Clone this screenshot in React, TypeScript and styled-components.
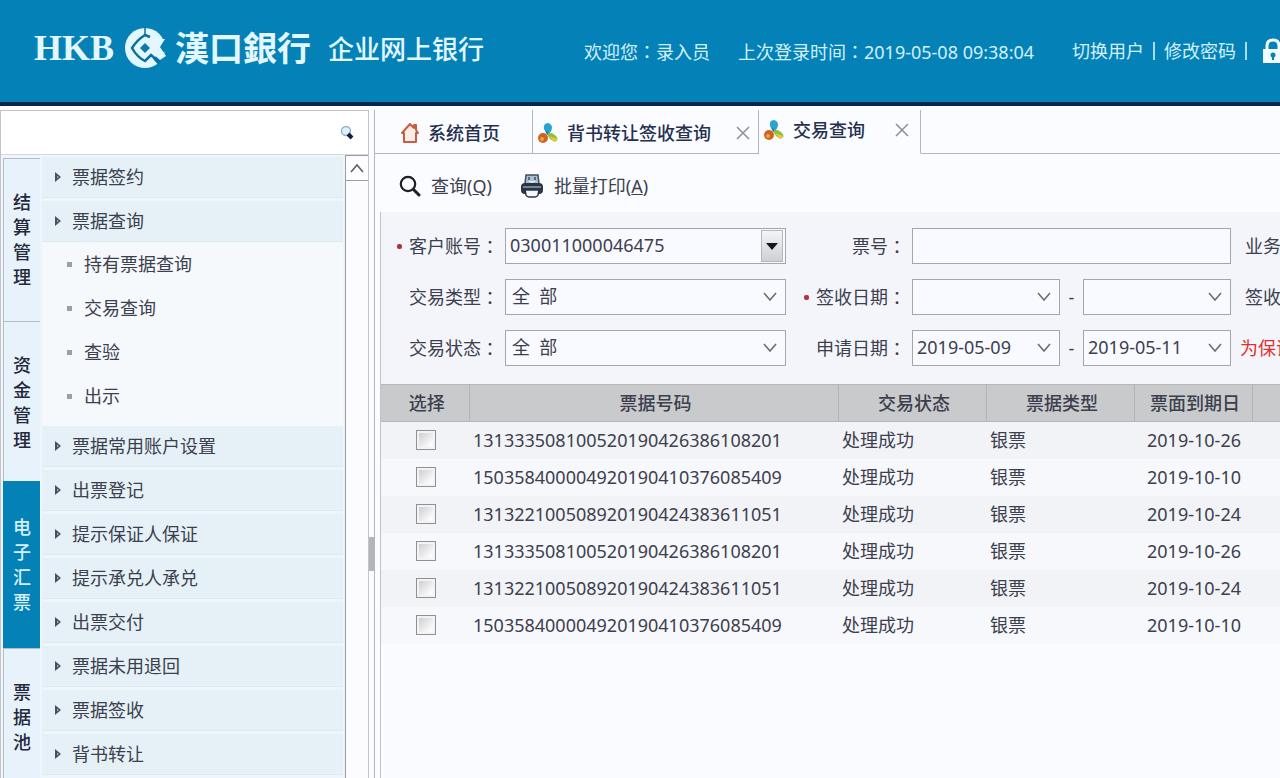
import React from "react";
import styled, { createGlobalStyle, css } from "styled-components";

const GlobalStyle = createGlobalStyle`
  * { box-sizing: border-box; }
  html, body, #root { height: 100%; }
  body {
    margin: 0;
    overflow: hidden;
    background: #fbfcff;
    color: #3c404e;
    font: 18px/24px "Noto Sans", "Noto Sans CJK SC", sans-serif;
  }
  button, input, select { font: inherit; color: inherit; }
  ul { list-style: none; margin: 0; padding: 0; }
  a { color: inherit; text-decoration: none; }
`;

const Page = styled.div`
  display: flex;
  flex-direction: column;
  height: 100%;
  overflow: hidden;
`;

const Header = styled.header`
  display: flex;
  align-items: center;
  flex: none;
  height: 106px;
  padding: 0 0 6px 34px;
  overflow: hidden;
  white-space: nowrap;
  background: #0482b8;
  border-bottom: 4px solid #02284c;
  color: #e2f7ff;
`;

const Brand = styled.div`
  display: flex;
  align-items: center;
  flex: none;
  width: 550px;
`;

const BrandLatin = styled.span`
  font: bold 36px/40px "Liberation Serif", serif;
`;

const BrandMark = styled.svg`
  width: 42px;
  height: 42px;
  margin: 0 9px 0 10px;
`;

const BrandName = styled.span`
  font-size: 34px;
  line-height: 40px;
  font-weight: 700;
`;

const BrandProduct = styled.h1`
  margin: 0 0 0 17px;
  padding-top: 2px;
  font-size: 26px;
  line-height: 40px;
  font-weight: 500;
`;

const HeaderInfo = styled.div`
  display: flex;
  align-items: center;
  flex: none;
  gap: 28px;
  padding-top: 6px;
  color: #d3f0fb;
`;

const HeaderLinks = styled.nav`
  display: flex;
  align-items: center;
  gap: 9px;
  margin-left: 10px;
`;

const Divider = styled.span`
  width: 2px;
  height: 18px;
  background: #a9dcf0;
`;

const LockIcon = styled.svg`
  width: 24px;
  height: 26px;
  margin-left: 6px;
  color: #f2fcff;
`;

const Colon = styled.span`
  font-family: "Noto Sans CJK TC", sans-serif;
`;

const Body = styled.div`
  display: flex;
  flex: 1;
  min-height: 0;
  padding-top: 4px;
`;

const Sidebar = styled.aside`
  display: flex;
  flex-direction: column;
  flex: none;
  width: 369px;
  border: 1px solid #c3c3c9;
  border-bottom: 0;
`;

const SearchBar = styled.label`
  display: flex;
  align-items: center;
  flex: none;
  height: 44px;
  padding: 0 13px 0 8px;
  background: #fff;
  border-bottom: 1px solid #d5d9df;
`;

const SearchInput = styled.input`
  flex: 1;
  min-width: 0;
  border: 0;
  outline: 0;
  background: transparent;
`;

const SidebarBody = styled.div`
  display: flex;
  flex: 1;
  min-height: 0;
  overflow: hidden;
  background: #eff6fb;
`;

const ModuleTabs = styled.nav`
  flex: none;
  width: 39px;
  padding: 3px 0 0 2px;
`;

const ModuleTab = styled.button<{ $active?: boolean }>`
  display: block;
  width: 37px;
  padding: 31px 8px;
  border: 1px solid #b4bcc6;
  border-width: 1px 0 0 1px;
  background: #e8f2fa;
  color: #23283a;
  font-size: 18px;
  line-height: 25px;
  font-weight: 500;
  text-align: center;
  white-space: normal;
  word-break: break-all;
  ${(p) =>
    p.$active &&
    css`
      position: relative;
      margin-top: -3px;
      padding: 33px 8px;
      border-color: #0482b8;
      background: #0482b8;
      color: #d5f1fb;
    `}
`;

const Menu = styled.ul`
  flex: 1;
  min-width: 0;
  padding: 2px 2px 0;
`;

const MenuLink = styled.a<{ $open?: boolean }>`
  display: flex;
  align-items: center;
  gap: 10px;
  height: 41px;
  margin-bottom: ${(p) => (p.$open ? 0 : 3)}px;
  padding-left: 12px;
  background: #e6f1f7;
  border-bottom: 1px solid #dee8ef;
`;

const SubMenu = styled.ul`
  padding-bottom: 8px;
  background: #f6f9fc;
`;

const SubLink = styled.a`
  display: flex;
  align-items: center;
  gap: 12px;
  height: 44px;
  padding-left: 25px;
`;

const Bullet = styled.span`
  width: 5px;
  height: 5px;
  background: #9aa0aa;
`;

const ScrollTrack = styled.div`
  flex: none;
  width: 23px;
  background: #fcfcff;
  border-left: 1px solid #9a9ca3;
`;

const ScrollUp = styled.button`
  display: flex;
  align-items: center;
  justify-content: center;
  width: 100%;
  height: 26px;
  padding: 0;
  border: 1px solid #9a9ca3;
  border-width: 1px 0;
  background: #fdfdff;
`;

const Splitter = styled.div`
  display: flex;
  align-items: center;
  flex: none;
  width: 5px;
  padding-top: 220px;
`;

const SplitterGrip = styled.span`
  width: 5px;
  height: 34px;
  background: #b4b5ba;
`;

const Main = styled.main`
  display: flex;
  flex-direction: column;
  flex: 1;
  min-width: 0;
  overflow: hidden;
  border-left: 1px solid #b4b6bd;
`;

const TabBar = styled.nav`
  display: flex;
  flex: none;
  height: 44px;
`;

const PageTab = styled.div<{ $width: number; $active?: boolean }>`
  display: flex;
  align-items: center;
  flex: none;
  width: ${(p) => p.$width}px;
  padding: 3px ${(p) => (p.$active ? 11 : 8)}px ${(p) => (p.$active ? 6 : 0)}px 4px;
  border-right: 1px solid #b4b6bd;
  border-bottom: 1px solid ${(p) => (p.$active ? "transparent" : "#b4b6bd")};
`;

const TabLink = styled.a<{ $home?: boolean }>`
  display: flex;
  align-items: center;
  flex: 1;
  gap: 8px;
  padding-left: ${(p) => (p.$home ? 21 : 0)}px;
  color: #25304f;
  font-weight: 500;
`;

const TabClose = styled.button`
  display: flex;
  padding: 0;
  border: 0;
  background: none;
`;

const TabRest = styled.div`
  flex: 1;
  border-bottom: 1px solid #b4b6bd;
`;

const Toolbar = styled.div`
  display: flex;
  align-items: center;
  flex: none;
  gap: 28px;
  height: 58px;
  padding: 6px 0 0 24px;
`;

const ToolButton = styled.button`
  display: flex;
  align-items: center;
  gap: 10px;
  padding: 0;
  border: 0;
  background: none;
`;

const Panel = styled.section`
  display: flex;
  flex-direction: column;
  flex: 1;
  min-height: 0;
  margin-left: 5px;
  border-left: 1px solid #c2c3c9;
  background: #fafbff;
`;

const QueryForm = styled.form`
  display: grid;
  grid-template-columns: 124px 281px 126px 319px auto;
  row-gap: 15px;
  flex: none;
  padding: 16px 0 18px;
  white-space: nowrap;
  background: #f4f5fb;
`;

const FieldLabel = styled.label`
  display: flex;
  align-items: center;
  justify-content: flex-end;
  padding-right: 6px;
`;

const Required = styled.span`
  width: 5px;
  height: 5px;
  margin-right: 7px;
  border-radius: 2px;
  background: #b3313d;
`;

const SideLabel = styled.span<{ $alert?: boolean }>`
  align-self: center;
  padding-left: ${(p) => (p.$alert ? 9 : 14)}px;
  color: ${(p) => (p.$alert ? "#e02f2f" : "inherit")};
`;

const FieldBox = styled.div`
  position: relative;
  display: flex;
  flex: 1;
  min-width: 0;
  height: 36px;
  border: 1px solid #a3a7ad;
  background: #f9faff;
`;

const controlStyle = css`
  appearance: none;
  flex: 1;
  min-width: 0;
  height: 100%;
  padding: 0 4px 2px;
  border: 0;
  border-radius: 0;
  outline: 0;
  background: transparent;
  line-height: 24px;
`;

const TextInput = styled.input`
  ${controlStyle}
`;

const SelectInput = styled.select`
  ${controlStyle}
  padding-left: 6px;
`;

const FieldArrow = styled.svg`
  position: absolute;
  top: 11px;
  right: 7px;
  width: 16px;
  height: 12px;
  pointer-events: none;
`;

const DropButton = styled.button`
  display: flex;
  align-items: center;
  justify-content: center;
  width: 22px;
  margin: 1px 2px;
  padding: 0;
  border: 1px solid #b5b7bc;
  background: linear-gradient(#f3f4f8, #cfd0d4);
`;

const DateRange = styled.div`
  display: flex;
  align-items: center;
`;

const Dash = styled.span`
  flex: none;
  width: 23px;
  text-align: center;
`;

const Table = styled.table`
  width: 100%;
  table-layout: fixed;
  border-collapse: collapse;
  white-space: nowrap;
`;

const HeadCell = styled.th<{ $width?: number }>`
  width: ${(p) => (p.$width ? `${p.$width}px` : "auto")};
  height: 37px;
  padding: 0 0 0 4px;
  border-right: 1px solid #b4b5b8;
  border-bottom: 1px solid #b6b7ba;
  border-top: 1px solid #b6b7ba;
  background: #c9cacc;
  font-weight: 500;
  text-align: center;
  &:last-child { border-right: 0; }
`;

const Row = styled.tr`
  background: #f7f8fc;
  &:nth-child(odd) { background: #f2f3f6; }
`;

const Cell = styled.td<{ $center?: boolean }>`
  height: 37px;
  padding: 0 0 0 ${(p) => (p.$center ? 2 : 4)}px;
  text-align: ${(p) => (p.$center ? "center" : "left")};
`;

const CheckBox = styled.input`
  appearance: none;
  display: block;
  width: 20px;
  height: 20px;
  margin: 0 auto;
  border: 1px solid #8e9096;
  background: linear-gradient(135deg, #c6c7cb, #fafafa 75%);
  box-shadow: inset 0 0 0 2px #f3f3f5;
`;

const modules = [
  { name: "结算管理" },
  { name: "资金管理" },
  { name: "电子汇票", active: true },
  { name: "票据池" },
];

const menu: { name: string; children?: string[] }[] = [
  { name: "票据签约" },
  { name: "票据查询", children: ["持有票据查询", "交易查询", "查验", "出示"] },
  { name: "票据常用账户设置" },
  { name: "出票登记" },
  { name: "提示保证人保证" },
  { name: "提示承兑人承兑" },
  { name: "出票交付" },
  { name: "票据未用退回" },
  { name: "票据签收" },
  { name: "背书转让" },
];

const bills = [
  ["131333508100520190426386108201", "2019-10-26"],
  ["150358400004920190410376085409", "2019-10-10"],
  ["131322100508920190424383611051", "2019-10-24"],
  ["131333508100520190426386108201", "2019-10-26"],
  ["131322100508920190424383611051", "2019-10-24"],
  ["150358400004920190410376085409", "2019-10-10"],
];

const MenuArrow = () => (
  <svg width="8" height="12" viewBox="0 0 8 12" aria-hidden="true">
    <path d="M1 1L7 6L1 11Z" fill="#4a5160" />
    <path d="M3 5L5 6L3 7Z" fill="#b9c2cc" />
  </svg>
);

const PinwheelIcon = () => (
  <svg width="22" height="22" viewBox="0 0 22 22" aria-hidden="true">
    <path d="M9 11L7 7Q6 1 11 1Q15 2 15 6Q15 9 12 12Z" fill="#2ba3cf" />
    <path d="M9 9L12 12L10 13Z" fill="#1d5f7d" />
    <circle cx="6" cy="16" r="5" fill="#cf6420" />
    <circle cx="5" cy="17" r="2" fill="#eba24a" />
    <path d="M11 11Q15 10 19 14Q22 18 19 19Q14 20 11 14Z" fill="#8fbf3c" />
    <path d="M12 14L20 17Q20 20 17 20Z" fill="#e3cc36" />
  </svg>
);

const HomeIcon = () => (
  <svg width="20" height="22" viewBox="0 0 20 22" aria-hidden="true">
    <path
      d="M10 2L2 11H4V20H16V11H18L16 8V3H14V6Z"
      fill="#fdeee5"
      stroke="#c95c45"
      strokeWidth="2"
      strokeLinejoin="round"
    />
  </svg>
);

const CloseIcon = () => (
  <svg width="14" height="14" viewBox="0 0 14 14" aria-hidden="true">
    <path d="M1 1L13 13M13 1L1 13" stroke="#8d8f96" strokeWidth="1.5" />
  </svg>
);

const SearchIcon = () => (
  <svg width="22" height="22" viewBox="0 0 22 22" aria-hidden="true">
    <circle cx="9" cy="9" r="7.2" fill="none" stroke="#1d1f2b" strokeWidth="2.2" />
    <path d="M14.500 14.500L20 20" stroke="#1d1f2b" strokeWidth="3" strokeLinecap="round" />
  </svg>
);

const PrinterIcon = () => (
  <svg width="24" height="24" viewBox="0 0 24 24" aria-hidden="true">
    <path d="M5 10L6 1H18L19 10Z" fill="#a9c0d2" stroke="#3f4d5e" strokeWidth="1.5" />
    <path d="M9 3V6M15 3V6" stroke="#3f4d5e" strokeWidth="1.500" />
    <path d="M9 7Q12 9 15 7" fill="none" stroke="#f2f7fb" strokeWidth="1.500" />
    <rect x="1" y="9" width="22" height="11" rx="4" fill="#2b3444" />
    <path d="M3 13H21" stroke="#8ea0b2" strokeWidth="1.5" />
    <path d="M5 16H19L18 21Q17 23 15 23H9Q7 23 6 21Z" fill="#f4f7fb" stroke="#2b3444" strokeWidth="1.5" />
  </svg>
);

const Chevron = () => (
  <FieldArrow viewBox="0 0 16 12" aria-hidden="true">
    <path d="M2 2L8 9L14 2" fill="none" stroke="#6b6e76" strokeWidth="1.6" />
  </FieldArrow>
);

const DateField = ({ id, label, value }: { id: string; label: string; value?: string }) => (
  <FieldBox>
    <TextInput id={id} aria-label={label} defaultValue={value} />
    <Chevron />
  </FieldBox>
);

const LabelFor = ({ id, text, required }: { id: string; text: string; required?: boolean }) => (
  <FieldLabel htmlFor={id}>
    {required && <Required />}
    {text}
    <Colon>：</Colon>
  </FieldLabel>
);

export default function App() {
  return (
    <Page>
      <GlobalStyle />
      <Header>
        <Brand>
          <BrandLatin>HKB</BrandLatin>
          <BrandMark viewBox="0 0 42 42" aria-hidden="true">
            <circle cx="21" cy="21" r="20" fill="currentColor" />
            <path d="M42 8L34 20L42 29L38 42L29 32L32 29L42 24Z" fill="#0482b8" />
            <path d="M34 12L41 12L36 20L42 29L36 33L27 25Z" fill="currentColor" />
            <path
              d="M36 36L27 28L21 34Q13 30 8 21Q13 13 21 8L26 10"
              fill="none"
              stroke="#0a6f9c"
              strokeWidth="2.500"
            />
            <path d="M21 0V8" stroke="#0a6f9c" strokeWidth="1.500" />
            <path d="M21 16L26 21L21 26L16 21Z" fill="#0b7bae" />
          </BrandMark>
          <BrandName>漢口銀行</BrandName>
          <BrandProduct>企业网上银行</BrandProduct>
        </Brand>
        <HeaderInfo>
          <span>
            欢迎您<Colon>：</Colon>录入员
          </span>
          <span>
            上次登录时间<Colon>：</Colon>2019-05-08 09:38:04
          </span>
          <HeaderLinks>
            <a href="#switch">切换用户</a>
            <Divider />
            <a href="#password">修改密码</a>
            <Divider />
            <LockIcon viewBox="0 0 24 26" aria-hidden="true">
              <path d="M5 13V8Q5 2 11 2Q17 2 17 8V13" fill="none" stroke="currentColor" strokeWidth="3" />
              <path d="M1 11H21V25H1Z" fill="currentColor" />
              <circle cx="11" cy="17" r="2.500" fill="#0482b8" />
              <path d="M10 17H12V22H10Z" fill="#0482b8" />
            </LockIcon>
          </HeaderLinks>
        </HeaderInfo>
      </Header>
      <Body>
        <Sidebar>
          <SearchBar>
            <SearchInput type="text" aria-label="搜索菜单" />
            <svg width="16" height="16" viewBox="0 0 16 16" aria-hidden="true">
              <circle cx="7" cy="6" r="4.500" fill="#e2f0fa" stroke="#8fb4cf" strokeWidth="1.500" />
              <path d="M9 9L13 13" stroke="#12203f" strokeWidth="4" />
            </svg>
          </SearchBar>
          <SidebarBody>
            <ModuleTabs>
              {modules.map((m) => (
                <ModuleTab key={m.name} type="button" $active={m.active}>
                  {m.name}
                </ModuleTab>
              ))}
            </ModuleTabs>
            <Menu>
              {menu.map((item) => (
                <li key={item.name}>
                  <MenuLink href="#menu" $open={!!item.children}>
                    <MenuArrow />
                    {item.name}
                  </MenuLink>
                  {item.children && (
                    <SubMenu>
                      {item.children.map((child) => (
                        <li key={child}>
                          <SubLink href="#submenu">
                            <Bullet />
                            {child}
                          </SubLink>
                        </li>
                      ))}
                    </SubMenu>
                  )}
                </li>
              ))}
            </Menu>
            <ScrollTrack>
              <ScrollUp type="button" aria-label="向上滚动">
                <svg width="14" height="10" viewBox="0 0 14 10" aria-hidden="true">
                  <path d="M1 9L7 2L13 9" fill="none" stroke="#5c5f68" strokeWidth="1.600" />
                </svg>
              </ScrollUp>
            </ScrollTrack>
          </SidebarBody>
        </Sidebar>
        <Splitter>
          <SplitterGrip />
        </Splitter>
        <Main>
          <TabBar>
            <PageTab $width={158}>
              <TabLink href="#home" $home>
                <HomeIcon />
                系统首页
              </TabLink>
            </PageTab>
            <PageTab $width={226}>
              <TabLink href="#endorse">
                <PinwheelIcon />
                背书转让签收查询
              </TabLink>
              <TabClose type="button" aria-label="关闭">
                <CloseIcon />
              </TabClose>
            </PageTab>
            <PageTab $width={162} $active>
              <TabLink href="#trade">
                <PinwheelIcon />
                交易查询
              </TabLink>
              <TabClose type="button" aria-label="关闭">
                <CloseIcon />
              </TabClose>
            </PageTab>
            <TabRest />
          </TabBar>
          <Toolbar>
            <ToolButton type="button">
              <SearchIcon />
              <span>
                查询(<u>Q</u>)
              </span>
            </ToolButton>
            <ToolButton type="button">
              <PrinterIcon />
              <span>
                批量打印(<u>A</u>)
              </span>
            </ToolButton>
          </Toolbar>
          <Panel>
            <QueryForm>
              <LabelFor id="account" text="客户账号" required />
              <FieldBox>
                <TextInput id="account" defaultValue="030011000046475" />
                <DropButton type="button" aria-label="选择账号">
                  <svg width="12" height="7" viewBox="0 0 12 7" aria-hidden="true">
                    <path d="M0 0H12L6 7Z" fill="#16171c" />
                  </svg>
                </DropButton>
              </FieldBox>
              <LabelFor id="bill" text="票号" />
              <FieldBox>
                <TextInput id="bill" />
              </FieldBox>
              <SideLabel>业务</SideLabel>

              <LabelFor id="type" text="交易类型" />
              <FieldBox>
                <SelectInput id="type">
                  <option>全&nbsp;&nbsp;部</option>
                </SelectInput>
                <Chevron />
              </FieldBox>
              <LabelFor id="sign-from" text="签收日期" required />
              <DateRange>
                <DateField id="sign-from" label="签收日期起" />
                <Dash>-</Dash>
                <DateField id="sign-to" label="签收日期止" />
              </DateRange>
              <SideLabel>签收</SideLabel>

              <LabelFor id="status" text="交易状态" />
              <FieldBox>
                <SelectInput id="status">
                  <option>全&nbsp;&nbsp;部</option>
                </SelectInput>
                <Chevron />
              </FieldBox>
              <LabelFor id="apply-from" text="申请日期" />
              <DateRange>
                <DateField id="apply-from" label="申请日期起" value="2019-05-09" />
                <Dash>-</Dash>
                <DateField id="apply-to" label="申请日期止" value="2019-05-11" />
              </DateRange>
              <SideLabel $alert>为保证</SideLabel>
            </QueryForm>
            <Table>
              <thead>
                <tr>
                  <HeadCell $width={88}>选择</HeadCell>
                  <HeadCell $width={369}>票据号码</HeadCell>
                  <HeadCell $width={148}>交易状态</HeadCell>
                  <HeadCell $width={148}>票据类型</HeadCell>
                  <HeadCell $width={118}>票面到期日</HeadCell>
                  <HeadCell />
                </tr>
              </thead>
              <tbody>
                {bills.map(([code, due], i) => (
                  <Row key={i}>
                    <Cell $center>
                      <CheckBox type="checkbox" aria-label={code} />
                    </Cell>
                    <Cell>{code}</Cell>
                    <Cell>处理成功</Cell>
                    <Cell>银票</Cell>
                    <Cell $center>{due}</Cell>
                    <Cell />
                  </Row>
                ))}
              </tbody>
            </Table>
          </Panel>
        </Main>
      </Body>
    </Page>
  );
}
